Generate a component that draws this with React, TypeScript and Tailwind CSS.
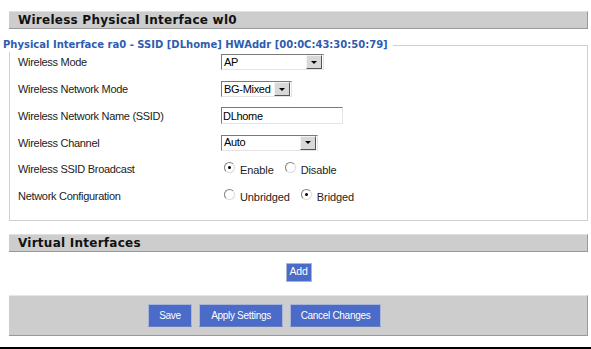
import React from "react";

const label = "text-[11px] tracking-[-0.3px] text-[#222] w-[203px] shrink-0";

function Select({ value, width }: { value: string; width: number }) {
  return (
    <div
      className="flex h-[16px] items-center border border-t-[#7a7a7a] border-l-[#7a7a7a] border-r-[#e4e4e4] border-b-[#e4e4e4] bg-white"
      style={{ width }}
    >
      <span className="flex-1 pl-[2px] text-[11px] leading-none tracking-[-0.3px] text-black">{value}</span>
      <span className="mr-[1px] flex h-[14px] w-[16px] items-center justify-center border border-t-[#f4f4f4] border-l-[#f4f4f4] border-r-[#555] border-b-[#555] bg-[#d8d8d8]">
        <span className="h-0 w-0 border-x-[3px] border-t-[3px] border-x-transparent border-t-black" />
      </span>
    </div>
  );
}

function Radio({ checked, text }: { checked?: boolean; text: string }) {
  return (
    <span className="mr-[11px] inline-flex items-center">
      <span className="relative mr-[5px] -mt-[4px] inline-block h-[11px] w-[11px] rounded-full border border-t-[#808080] border-l-[#808080] border-r-[#dcdcdc] border-b-[#dcdcdc] bg-white">
        {checked && <span className="absolute left-[3px] top-[3px] h-[3px] w-[3px] rounded-full bg-black" />}
      </span>
      <span className="mt-[2px] text-[11px] tracking-[-0.1px] text-[#222]">{text}</span>
    </span>
  );
}

function Row({ name, children }: { name: string; children: React.ReactNode }) {
  return (
    <div className="flex h-[26.8px] items-center">
      <span className={label}>{name}</span>
      {children}
    </div>
  );
}

function Header({ title }: { title: string }) {
  return (
    <div className="flex h-[18px] items-center border-t border-t-[#e0e0e0] border-b border-b-[#999] border-r border-r-[#999] bg-[#cdcdcd] pl-[9px] text-[12px] font-bold tracking-[0.25px] text-[#111]">
      {title}
    </div>
  );
}

function Btn({ children, w }: { children: React.ReactNode; w: string }) {
  return (
    <button className={`h-[23px] border border-[#a8b4d8] border-b-[#6b7fb8] bg-[#4a6bc8] text-[10px] tracking-[-0.3px] text-white ${w}`}>
      {children}
    </button>
  );
}

export default function App() {
  return (
    <div className="h-[349px] w-[591px] overflow-hidden bg-white pt-[11px] pl-[9px] pr-[3px]" style={{ fontFamily: '"DejaVu Sans", sans-serif' }}>
      <Header title="Wireless Physical Interface wl0" />
      <fieldset className="mt-[9px] border border-[#d0d0d0] pb-[10px] pl-[8px]" style={{ fontFamily: '"Liberation Sans", Arial, sans-serif' }}>
        <legend className="-ml-[15px] pr-[5px] text-[10px] leading-[14px] font-bold text-[#2f5cb0]" style={{ fontFamily: '"DejaVu Sans", sans-serif' }}>
          Physical Interface ra0 - SSID [DLhome] HWAddr [00:0C:43:30:50:79]
        </legend>
        <div className="-mt-[3px]">
          <Row name="Wireless Mode">
            <Select value="AP" width={103} />
          </Row>
          <Row name="Wireless Network Mode">
            <Select value="BG-Mixed" width={71} />
          </Row>
          <Row name="Wireless Network Name (SSID)">
            <div className="flex h-[17px] w-[122px] items-center border border-t-[#7a7a7a] border-l-[#7a7a7a] border-r-[#e4e4e4] border-b-[#e4e4e4] bg-white pl-[1px] text-[11px] tracking-[-0.3px] text-black">
              DLhome
            </div>
          </Row>
          <Row name="Wireless Channel">
            <Select value="Auto" width={97} />
          </Row>
          <Row name="Wireless SSID Broadcast">
            <div className="flex items-center pl-[3px]">
              <Radio checked text="Enable" />
              <Radio text="Disable" />
            </div>
          </Row>
          <Row name="Network Configuration">
            <div className="flex items-center pl-[3px]">
              <Radio text="Unbridged" />
              <Radio checked text="Bridged" />
            </div>
          </Row>
        </div>
      </fieldset>
      <div className="mt-[13px]">
        <Header title="Virtual Interfaces" />
      </div>
      <div className="mt-[11px] flex justify-center" style={{ fontFamily: '"Liberation Sans", Arial, sans-serif' }}>
        <button className="h-[19px] w-[26px] border border-[#a8b4d8] bg-[#4a6bc8] text-[10.5px] tracking-[-0.2px] text-white">Add</button>
      </div>
      <div className="mt-[13px] flex h-[41px] items-center gap-[7px] border-t border-t-[#e6e6e6] border-b border-b-[#999] border-r border-r-[#999] bg-[#cdcdcd] pl-[139px]" style={{ fontFamily: '"Liberation Sans", Arial, sans-serif' }}>
        <Btn w="w-[44px]">Save</Btn>
        <Btn w="w-[84px]">Apply Settings</Btn>
        <Btn w="w-[91px]">Cancel Changes</Btn>
      </div>
      <div className="-ml-[9px] mt-[11px] h-[4px] w-[591px] bg-black" />
    </div>
  );
}
